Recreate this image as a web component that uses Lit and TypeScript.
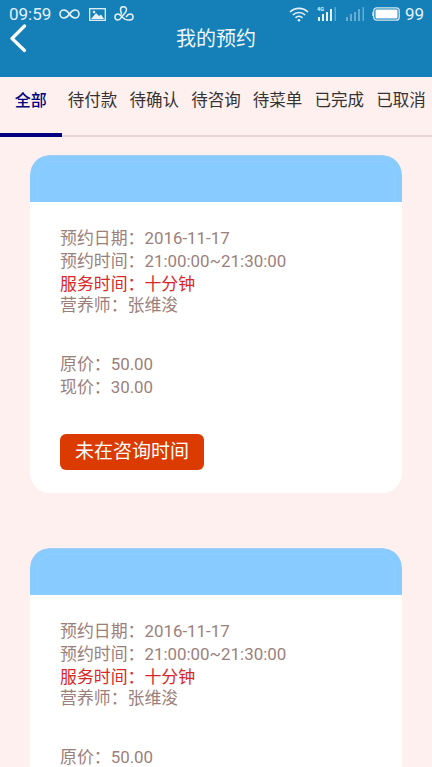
import { LitElement, html, css } from "lit";
import { customElement } from "lit/decorators.js";

const tabs = ["全部", "待付款", "待确认", "待咨询", "待菜单", "已完成", "已取消"];

@customElement("app-root")
export class AppRoot extends LitElement {
  static styles = css`
    :host { display: block; width: 432px; height: 767px; overflow: hidden; background: #fff0f0;
      font-family: "Roboto", "Noto Sans CJK SC", sans-serif; }
    .top { height: 77px; background: #1580b8; color: #fff; display: flex; flex-direction: column; }
    .status { height: 24px; padding: 4px 8px 0 9px; display: flex; align-items: center; font-size: 17px; color: #e4f1f8; box-sizing: border-box; }
    .status svg { display: block; }
    .ic1 { margin-left: 8px; }
    .ic2 { margin-left: 9px; }
    .ic3 { margin-left: 8px; }
    .right { margin-left: auto; display: flex; align-items: center; }
    .sig { margin-left: 8px; }
    .bat { margin-left: 7px; }
    .pct { margin-left: 5px; }
    .nav { position: relative; flex: 1; display: flex; justify-content: center; padding-top: 3px; }
    .nav span { font-size: 20px; line-height: 24px; color: #eef6fa; }
    .back { position: absolute; left: 10px; top: 0px; }
    .tabs { height: 60px; box-sizing: border-box; display: flex; border-bottom: 2px solid #e8d6d8; font-size: 16.500px; color: #333; }
    .tab { width: 61.700px; flex: none; text-align: center; line-height: 47px; white-space: nowrap; box-sizing: border-box; }
    .tab.on { color: #00007f; font-weight: 500; font-size: 16px; height: 60px; border-bottom: 4px solid #00007f; margin-bottom: -2px; }
    .list { padding: 18px 30px 0; display: flex; flex-direction: column; gap: 55px; }
    .card { background: #fff; border-radius: 20px; height: 338px; flex: none; overflow: hidden; }
    .band { height: 47px; box-sizing: border-box; padding: 6px 7px 0; background: #87cbff; border-radius: 20px 20px 0 0; box-shadow: inset 0 1px 0 #a3cdf2; }
    .band div { height: 100%; box-sizing: border-box; border: 1px solid #90cefe; border-bottom: 0; border-radius: 14px 14px 0 0; }
    .body { padding: 25px 30px 0; font-size: 16.900px; line-height: 23px; color: #9a7f7c; }
    .body div { height: 23px; }
    .body .red { color: #d8282a; margin-bottom: -2px; }
    .body .gap { height: 36px; }
    .body .btn { display: inline-block; margin-top: 34.500px; background: #db3a00; color: #fff; font-size: 19px; line-height: 36px; height: 36px; width: 144px; text-align: center; border-radius: 6px; }
  `;

  card() {
    return html`<div class="card">
      <div class="band"><div></div></div>
      <div class="body">
        <div>预约日期：2016-11-17</div>
        <div>预约时间：21:00:00~21:30:00</div>
        <div class="red">服务时间：十分钟</div>
        <div>营养师：张维浚</div>
        <div class="gap"></div>
        <div>原价：50.00</div>
        <div>现价：30.00</div>
        <div class="btn">未在咨询时间</div>
      </div>
    </div>`;
  }

  render() {
    return html`
      <div class="top">
        <div class="status">
          <span>09:59</span>
          <svg class="ic1" width="21" height="10" viewBox="0 0 21 10" fill="none" stroke="#e4f1f8" stroke-width="1.600"><path d="M10.500 5C8.500 2 7 1 5 1a4 4 0 0 0 0 8c2 0 3.500-1 5.500-4s3.500-4 5.500-4a4 4 0 0 1 0 8c-2 0-3.500-1-5.500-4Z"/></svg>
          <svg class="ic2" width="17" height="13" viewBox="0 0 17 13"><rect x=".7" y=".7" width="15.600" height="11.600" fill="none" stroke="#e4f1f8" stroke-width="1.300"/><path d="M2 11 7 5l3 3 2-1.500 3 4.500Z" fill="#e4f1f8"/><circle cx="5" cy="4" r="1.300" fill="#e4f1f8"/></svg>
          <svg class="ic3" width="20" height="16" viewBox="0 0 20 16" fill="none" stroke="#e4f1f8" stroke-width="1.500"><path d="M7 8.500C8 7 6.500 5.500 6.500 3.700a3 3 0 0 1 6 0c0 2-1.500 3.300-3.500 5.600C7.500 11 6.500 14 4 14a3 3 0 0 1 0-6c1.500 0 2.500 1.500 4 3s3 3 6 3h2a3 3 0 0 0 0-6c-2 0-3 1.500-4 3"/></svg>
          <div class="right">
            <svg width="20" height="15" viewBox="0 0 20 15" fill="none" stroke="#e4f1f8" stroke-width="1.700"><path d="M1 5a13 13 0 0 1 18 0M3.800 8a9 9 0 0 1 12.400 0M6.500 10.800a5 5 0 0 1 7 0"/><circle cx="10" cy="13.300" r="1.300" fill="#e4f1f8" stroke="none"/></svg>
            <svg class="sig" width="20" height="16" viewBox="0 0 20 16" fill="#e4f1f8"><text x="0" y="5" font-size="5.500" font-family="Roboto" font-weight="700">4G</text><rect x="1" y="11" width="2" height="4"/><rect x="5" y="8" width="2" height="7"/><rect x="9" y="6" width="2" height="9"/><rect x="13" y="3" width="2" height="12"/><rect x="17.500" y="1" width="1.500" height="14" opacity=".35"/></svg>
            <svg class="sig" width="20" height="16" viewBox="0 0 20 16" fill="#e4f1f8" opacity=".4"><rect x="1" y="11" width="2" height="4"/><rect x="5" y="8" width="2" height="7"/><rect x="9" y="6" width="2" height="9"/><rect x="13" y="3" width="2" height="12"/><rect x="17.500" y="1" width="1.500" height="14"/></svg>
            <svg class="bat" width="28" height="14" viewBox="0 0 28 14"><rect x="1.700" y=".8" width="25.500" height="12.400" rx="3" fill="none" stroke="#d5e8f3" stroke-width="1.300"/><rect x=".3" y="5" width="1.400" height="4" fill="#d5e8f3"/><rect x="3.500" y="2.600" width="22" height="8.800" rx="1" fill="#fff"/></svg>
            <span class="pct">99</span>
          </div>
        </div>
        <div class="nav">
          <svg class="back" width="18" height="30" viewBox="0 0 18 30" fill="none" stroke="#fff" stroke-width="3.200" stroke-linecap="round" stroke-linejoin="round"><path d="M14.500 2 2 14.500 14.500 26.500"/></svg>
          <span>我的预约</span>
        </div>
      </div>
      <div class="tabs">
        ${tabs.map((t, i) => html`<div class="tab ${i === 0 ? "on" : ""}">${t}</div>`)}
      </div>
      <div class="list">${this.card()}${this.card()}</div>
    `;
  }
}
